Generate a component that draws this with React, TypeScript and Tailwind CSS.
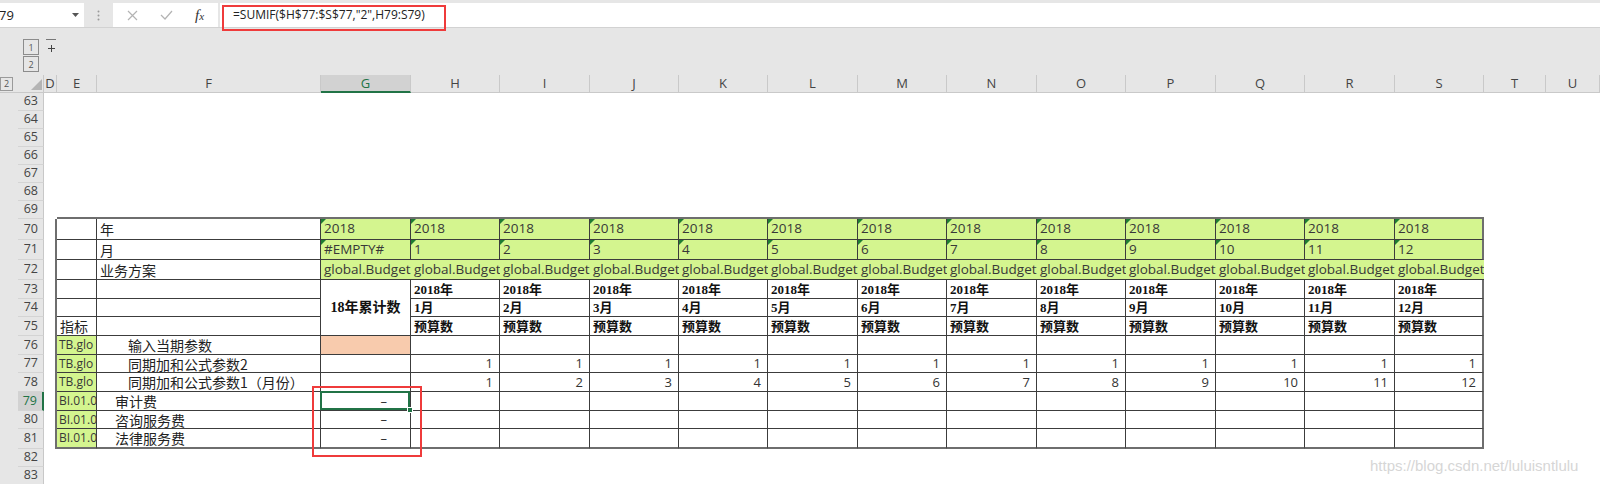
import React from 'react';

const UI = "font-['Open_Sans','Noto_Sans_CJK_SC',sans-serif]";
const CJK = "font-['Noto_Sans_CJK_SC',sans-serif]";
const SERIFB = "font-['Liberation_Serif','Noto_Sans_CJK_SC',serif] font-bold";

const COLW = [
  'w-[13px]', 'w-[40px]', 'w-[224px]', 'w-[90px]', 'w-[89px]', 'w-[90px]', 'w-[89px]', 'w-[89px]', 'w-[90px]',
  'w-[89px]', 'w-[90px]', 'w-[89px]', 'w-[90px]', 'w-[89px]', 'w-[90px]', 'w-[89px]', 'w-[62px]', 'w-[54px]',
];
const LETTERS = ['D', 'E', 'F', 'G', 'H', 'I', 'J', 'K', 'L', 'M', 'N', 'O', 'P', 'Q', 'R', 'S', 'T', 'U'];

type Cell = { cls?: string; content?: React.ReactNode; tri?: boolean; sel?: boolean };

const LN = 'border-[#3c3c3c]';
const GREEN = 'bg-[#d4f58f]';

const greenText = (t: string) => (
  <span className={`pl-[3px] text-[13.5px] leading-none text-[#383838] whitespace-nowrap ${UI}`}>{t}</span>
);
const eText = (t: string) => (
  <span className={`pl-[2px] text-[12px] leading-none text-[#383838] whitespace-nowrap ${UI}`}>{t}</span>
);
const boldText = (t: string) => (
  <span className={`pl-[3px] text-[13px] leading-none text-[#111] whitespace-nowrap ${SERIFB}`}>{t}</span>
);
const cjk = (t: string, pad: string) => (
  <span className={`${pad} text-[14px] leading-none text-[#222] whitespace-nowrap ${CJK}`}>{t}</span>
);
const num = (t: string) => <span className={`text-[13px] leading-none text-[#333] ${UI}`}>{t}</span>;

function fContent(n: number): React.ReactNode {
  switch (n) {
    case 70:
      return cjk('年', 'pl-[3px]');
    case 71:
      return cjk('月', 'pl-[3px]');
    case 72:
      return cjk('业务方案', 'pl-[3px]');
    case 76:
      return cjk('输入当期参数', 'pl-[31px]');
    case 77:
      return cjk('同期加和公式参数2', 'pl-[31px]');
    case 78:
      return cjk('同期加和公式参数1（月份）', 'pl-[31px]');
    case 79:
      return cjk('审计费', 'pl-[18px]');
    case 80:
      return cjk('咨询服务费', 'pl-[18px]');
    case 81:
      return cjk('法律服务费', 'pl-[18px]');
    default:
      return null;
  }
}

function buildRow(n: number): Cell[] {
  const c: Cell[] = Array.from({ length: 18 }, () => ({}));
  if (n === 69) {
    for (let i = 1; i <= 15; i++) c[i] = { cls: 'border-b-2 border-[#6e6e6e]' };
    return c;
  }
  if (n < 70 || n > 81) return c;
  const last = n === 81;
  const bb = last ? 'border-b-2 border-b-[#6e6e6e]' : 'border-b';
  c[0] = { cls: 'border-r-2 border-[#6e6e6e]' };

  // E
  const et = n >= 76 && n <= 78 ? 'TB.glo' : n >= 79 ? 'BI.01.0' : '';
  c[1] = {
    cls: `border-r ${bb} ${LN} ${n >= 76 ? GREEN : ''}`,
    content: n === 75 ? cjk('指标', 'pl-[3px]') : et ? eText(et) : null,
  };
  // F
  c[2] = { cls: `border-r ${bb} ${LN}`, content: fContent(n) };

  // G
  if (n === 70) c[3] = { cls: `${GREEN} border-r border-b ${LN}`, tri: true, content: greenText('2018') };
  else if (n === 71) c[3] = { cls: `${GREEN} border-r border-b ${LN}`, tri: true, content: greenText('#EMPTY#') };
  else if (n === 72) c[3] = { cls: `${GREEN} border-b ${LN}`, content: greenText('global.Budget') };
  else if (n === 73) c[3] = { cls: `border-r ${LN}` };
  else if (n === 74)
    c[3] = {
      cls: `border-r ${LN} justify-center`,
      content: <span className={`text-[14px] leading-none text-[#111] whitespace-nowrap ${SERIFB}`}>18年累计数</span>,
    };
  else if (n === 75) c[3] = { cls: `border-r border-b ${LN}` };
  else if (n === 76) c[3] = { cls: `bg-[#f8cbad] border-r border-b ${LN}` };
  else if (n === 77 || n === 78) c[3] = { cls: `border-r border-b ${LN}` };
  else
    c[3] = {
      cls: `border-r ${bb} ${LN} justify-end pr-[23px]`,
      sel: n === 79,
      content: <span className={`text-[13px] leading-none text-[#333] ${UI}`}>–</span>,
    };

  // H..S
  for (let i = 4; i <= 15; i++) {
    const m = i - 3;
    const rr = i === 15 ? 'border-r-2 border-r-[#6e6e6e]' : 'border-r';
    if (n === 70) c[i] = { cls: `${GREEN} ${rr} border-b ${LN}`, tri: true, content: greenText('2018') };
    else if (n === 71) c[i] = { cls: `${GREEN} ${rr} border-b ${LN}`, tri: true, content: greenText(String(m)) };
    else if (n === 72) c[i] = { cls: `${GREEN} border-b ${LN}`, content: greenText('global.Budget') };
    else if (n === 73) c[i] = { cls: `${rr} border-b ${LN}`, content: boldText('2018年') };
    else if (n === 74) c[i] = { cls: `${rr} border-b ${LN}`, content: boldText(`${m}月`) };
    else if (n === 75) c[i] = { cls: `${rr} border-b ${LN}`, content: boldText('预算数') };
    else if (n === 76) c[i] = { cls: `${rr} border-b ${LN}` };
    else if (n === 77) c[i] = { cls: `${rr} border-b ${LN} justify-end pr-[6px]`, content: num('1') };
    else if (n === 78) c[i] = { cls: `${rr} border-b ${LN} justify-end pr-[6px]`, content: num(String(m)) };
    else c[i] = { cls: `${rr} ${bb} ${LN}` };
  }
  return c;
}

function rowHeight(n: number): string {
  switch (n) {
    case 70:
      return 'h-[21px]';
    case 71:
      return 'h-[20px]';
    case 72:
      return 'h-[20px]';
    case 73:
      return 'h-[19px]';
    case 75:
      return 'h-[19px]';
    case 76:
      return 'h-[19px]';
    case 78:
      return 'h-[19px]';
    case 79:
      return 'h-[19px]';
    case 81:
      return 'h-[20px]';
    default:
      return 'h-[18px]';
  }
}

function SheetRow({ n }: { n: number }) {
  const cells = buildRow(n);
  const active = n === 79;
  return (
    <div className={`flex ${rowHeight(n)}`}>
      <div className="w-[44px] h-full shrink-0 flex bg-[#e6e6e6]">
        <div className="w-[18px] h-full" />
        <div
          className={`flex-1 h-full flex items-center justify-end pr-[5px] border-b border-[#d4d4d4] text-[12.5px] leading-none ${
            active ? 'bg-[#d2d2d2] text-[#217346] border-r-2 border-r-[#217346]' : 'text-[#444] border-r border-r-[#c8c8c8]'
          }`}
        >
          {n}
        </div>
      </div>
      {cells.map((c, i) => (
        <div
          key={i}
          className={`${COLW[i]} h-full shrink-0 relative flex items-center ${c.sel ? '' : 'overflow-hidden'} ${c.cls ?? ''}`}
        >
          {c.tri && (
            <span className="absolute left-0 top-0 w-0 h-0 border-t-[5px] border-r-[5px] border-t-[#1e7d32] border-r-transparent" />
          )}
          {c.content}
          {c.sel && (
            <>
              <span className="absolute -left-px -top-px right-0 bottom-0 border-2 border-[#217346] z-10" />
              <span className="absolute -right-[3px] -bottom-[3px] w-[6px] h-[6px] bg-[#217346] border border-white z-10" />
            </>
          )}
        </div>
      ))}
    </div>
  );
}

function TopBar() {
  return (
    <div className="h-[75px] bg-[#e6e6e6]">
      <div className="flex h-[28px] pt-[3px] border-b border-[#d2d2d2]">
        <div className="w-[84px] h-full bg-white flex items-center justify-between pr-[5px]">
          <span className="text-[13px] leading-none text-[#222] -ml-[1px]">79</span>
          <svg width="7" height="4" viewBox="0 0 7 4">
            <path d="M0 0 L7 0 L3.5 4Z" fill="#555" />
          </svg>
        </div>
        <div className="w-[29px] h-full flex items-center justify-center">
          <svg width="3" height="11" viewBox="0 0 3 11">
            <circle cx="1.5" cy="1.5" r="1" fill="#9a9a9a" />
            <circle cx="1.5" cy="5.5" r="1" fill="#9a9a9a" />
            <circle cx="1.5" cy="9.5" r="1" fill="#9a9a9a" />
          </svg>
        </div>
        <div className="w-[105px] h-full bg-white flex items-center">
          <div className="w-[38px] flex justify-center">
            <svg width="11" height="11" viewBox="0 0 11 11">
              <path d="M1 1 L10 10 M10 1 L1 10" stroke="#b3b3b3" strokeWidth="1.2" />
            </svg>
          </div>
          <div className="w-[30px] flex justify-center">
            <svg width="13" height="10" viewBox="0 0 13 10">
              <path d="M1 5 L5 9 L12 1" stroke="#b3b3b3" strokeWidth="1.2" fill="none" />
            </svg>
          </div>
          <div className="w-[37px] flex justify-center">
            <span className="italic font-['Liberation_Serif',serif] text-[15px] leading-none text-[#333]">
              f<span className="text-[11px]">x</span>
            </span>
          </div>
        </div>
        <div className="w-[2px]" />
        <div className="flex-1 h-full bg-white flex items-center pl-[13px]">
          <span className="text-[12px] leading-none text-[#222] whitespace-nowrap">=SUMIF($H$77:$S$77,"2",H79:S79)</span>
        </div>
      </div>
      <div className="h-[47px] flex pl-[23px] pt-[11px] gap-[7px]">
        <div className="flex flex-col gap-[1px]">
          <div className="w-[16px] h-[16px] border border-[#8c8c8c] flex items-center justify-center text-[9px] leading-none text-[#555]">
            1
          </div>
          <div className="w-[16px] h-[16px] border border-[#8c8c8c] flex items-center justify-center text-[9px] leading-none text-[#555]">
            2
          </div>
        </div>
        <div className="w-[10px] flex flex-col items-center">
          <div className="w-[10px] border-t border-[#777]" />
          <svg className="mt-[5px]" width="7" height="7" viewBox="0 0 7 7">
            <path d="M0 3.5 H7 M3.5 0 V7" stroke="#444" strokeWidth="1" />
          </svg>
        </div>
      </div>
    </div>
  );
}

function ColHeader() {
  return (
    <div className="flex h-[18px] bg-[#e6e6e6]">
      <div className="w-[44px] h-full shrink-0 flex items-center justify-between border-b border-r border-[#c9c9c9] pr-[1px]">
        <div className="w-[13px] h-[14px] border border-[#9a9a9a] flex items-center justify-center text-[9px] leading-none text-[#555]">
          2
        </div>
        <svg width="11" height="11" viewBox="0 0 11 11" className="self-end mb-[2px]">
          <polygon points="11,0 11,11 0,11" fill="#b4b4b4" />
        </svg>
      </div>
      {LETTERS.map((l, i) => (
        <div
          key={l}
          className={`${COLW[i]} h-full shrink-0 flex items-center justify-center border-r text-[13px] leading-none ${
            i === 3
              ? 'bg-[#d2d2d2] text-[#217346] border-[#c9c9c9] border-b-2 border-b-[#217346]'
              : 'text-[#444] border-b border-[#c9c9c9]'
          }`}
        >
          {l}
        </div>
      ))}
    </div>
  );
}

export default function App() {
  const rowNums = Array.from({ length: 21 }, (_, k) => 63 + k);
  return (
    <div className={`w-[1600px] h-[484px] overflow-hidden bg-white relative ${UI}`}>
      <TopBar />
      <ColHeader />
      {rowNums.map((n) => (
        <SheetRow key={n} n={n} />
      ))}
      <div className="absolute left-[222px] top-[5px] w-[224px] h-[26px] border-2 border-[#ef3b3b] z-20" />
      <div className="absolute left-[312px] top-[386px] w-[110px] h-[71px] border-2 border-[#ef3b3b] z-20" />
      <div className="absolute left-[1370px] top-[457px] text-[15px] leading-[18px] text-[#d6d6d6] font-['Liberation_Sans',sans-serif] whitespace-nowrap">
        https://blog.csdn.net/luluisntlulu
      </div>
    </div>
  );
}
